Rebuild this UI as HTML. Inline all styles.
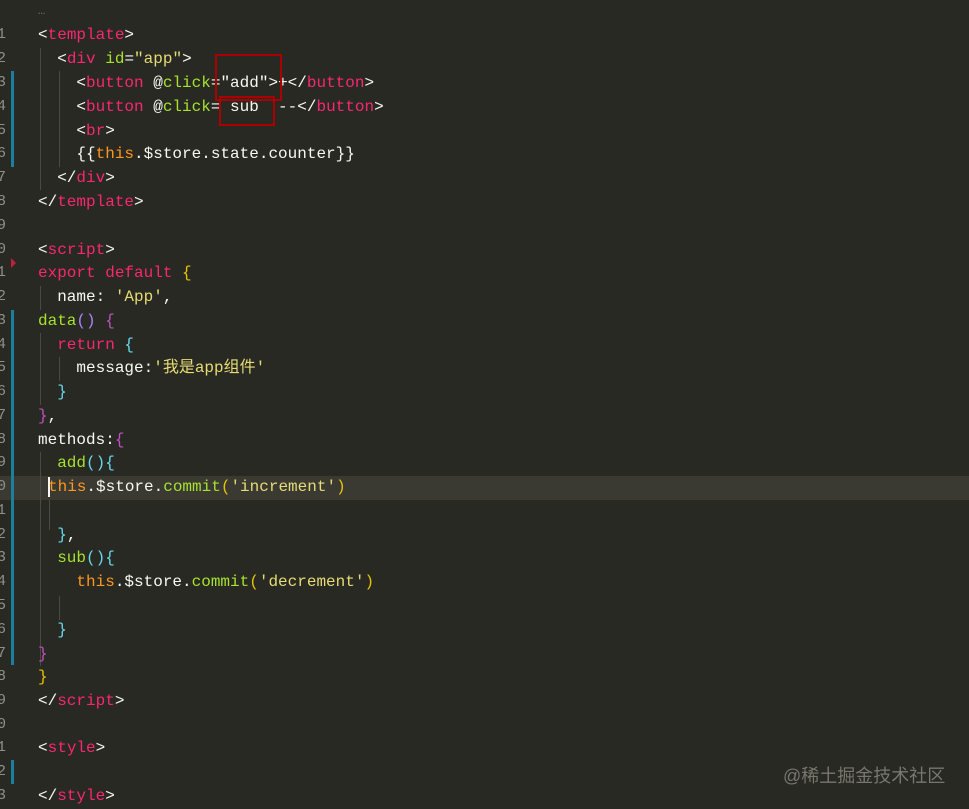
<!DOCTYPE html>
<html><head><meta charset="utf-8"><style>
body{margin:0;width:969px;height:809px;background:#282923;overflow:hidden;position:relative;font-family:"Liberation Mono","Noto Sans CJK SC",monospace;font-size:16px;color:#f8f8f2}
.l{position:absolute;left:38px;height:24px;line-height:24px;white-space:pre}
.n{position:absolute;left:-6px;width:12px;text-align:right;color:#8f908a;height:24px;line-height:24px;font-size:15px}
.t{color:#f92672}.a{color:#a6e22e}.s{color:#e6db74}.o{color:#fd971f}.b{color:#66d9ef}.p{color:#ae81ff}.y{color:#e6c400}.m{color:#c050c0}
.bar{position:absolute;left:11px;width:3px;background:#1b7fa0}
.g{position:absolute;width:1px;background:#4a4a44}
.box{position:absolute;border:2px solid #a00;}
</style></head><body>
<div style="position:absolute;left:0;top:476px;width:969px;height:24px;background:#3a3a33"></div>
<div class="bar" style="top:71px;height:96px"></div>
<div class="bar" style="top:310px;height:355px"></div>
<div class="bar" style="top:760px;height:24px"></div>
<div class="g" style="left:40px;top:48px;height:142px"></div>
<div class="g" style="left:59px;top:71px;height:96px"></div>
<div class="g" style="left:40px;top:286px;height:24px"></div>
<div class="g" style="left:40px;top:333px;height:72px"></div>
<div class="g" style="left:59px;top:357px;height:24px"></div>
<div class="g" style="left:40px;top:452px;height:214px"></div>
<div class="g" style="left:59px;top:596px;height:24px"></div>
<div class="g" style="left:49px;top:500px;height:30px"></div>
<div class="l" style="top:-1px;color:#75715e;font-size:12px">…</div>
<div class="l" style="top:23px">&lt;<span class="t">template</span>&gt;</div>
<div class="l" style="top:47px">  &lt;<span class="t">div</span> <span class="a">id</span>=<span class="s">"app"</span>&gt;</div>
<div class="l" style="top:71px">    &lt;<span class="t">button</span> @<span class="a">click</span>=<span>"add"</span>&gt;+&lt;/<span class="t">button</span>&gt;</div>
<div class="l" style="top:95px">    &lt;<span class="t">button</span> @<span class="a">click</span>= sub  --&lt;/<span class="t">button</span>&gt;</div>
<div class="l" style="top:119px">    &lt;<span class="t">br</span>&gt;</div>
<div class="l" style="top:142px">    {{<span class="o">this</span>.$store.state.counter}}</div>
<div class="l" style="top:166px">  &lt;/<span class="t">div</span>&gt;</div>
<div class="l" style="top:190px">&lt;/<span class="t">template</span>&gt;</div>
<div class="l" style="top:238px">&lt;<span class="t">script</span>&gt;</div>
<div class="l" style="top:261px"><span class="t">export default</span> <span class="y">{</span></div>
<div class="l" style="top:285px">  name: <span class="s">'App'</span>,</div>
<div class="l" style="top:309px"><span class="a">data</span><span class="p">()</span> <span class="m">{</span></div>
<div class="l" style="top:333px">  <span class="t">return</span> <span class="b">{</span></div>
<div class="l" style="top:356px">    message:<span class="s">'我是app组件'</span></div>
<div class="l" style="top:380px">  <span class="b">}</span></div>
<div class="l" style="top:404px"><span class="m">}</span>,</div>
<div class="l" style="top:428px">methods:<span class="m">{</span></div>
<div class="l" style="top:451px">  <span class="a">add</span><span class="b">(){</span></div>
<div class="l" style="top:475px;left:48px"><span class="o">this</span>.$store.<span class="a">commit</span><span class="y">(</span><span class="s">'increment'</span><span class="y">)</span></div>
<div class="l" style="top:523px">  <span class="b">}</span>,</div>
<div class="l" style="top:546px">  <span class="a">sub</span><span class="b">(){</span></div>
<div class="l" style="top:570px">    <span class="o">this</span>.$store.<span class="a">commit</span><span class="y">(</span><span class="s">'decrement'</span><span class="y">)</span></div>
<div class="l" style="top:618px">  <span class="b">}</span></div>
<div class="l" style="top:642px"><span class="m">}</span></div>
<div class="l" style="top:665px"><span class="y">}</span></div>
<div class="l" style="top:689px">&lt;/<span class="t">script</span>&gt;</div>
<div class="l" style="top:736px">&lt;<span class="t">style</span>&gt;</div>
<div class="l" style="top:784px">&lt;/<span class="t">style</span>&gt;</div>
<div style="position:absolute;left:48px;top:477px;width:2px;height:20px;background:#f8f8f0"></div>
<div class="n" style="top:23px">1</div><div class="n" style="top:47px">2</div><div class="n" style="top:71px">3</div><div class="n" style="top:95px">4</div><div class="n" style="top:119px">5</div><div class="n" style="top:142px">6</div><div class="n" style="top:166px">7</div><div class="n" style="top:190px">8</div><div class="n" style="top:214px">9</div><div class="n" style="top:238px">0</div><div class="n" style="top:261px">1</div><div class="n" style="top:285px">2</div><div class="n" style="top:309px">3</div><div class="n" style="top:333px">4</div><div class="n" style="top:356px">5</div><div class="n" style="top:380px">6</div><div class="n" style="top:404px">7</div><div class="n" style="top:428px">8</div><div class="n" style="top:451px">9</div><div class="n" style="top:475px">0</div><div class="n" style="top:499px">1</div><div class="n" style="top:523px">2</div><div class="n" style="top:546px">3</div><div class="n" style="top:570px">4</div><div class="n" style="top:594px">5</div><div class="n" style="top:618px">6</div><div class="n" style="top:642px">7</div><div class="n" style="top:665px">8</div><div class="n" style="top:689px">9</div><div class="n" style="top:713px">0</div><div class="n" style="top:736px">1</div><div class="n" style="top:760px">2</div><div class="n" style="top:784px">3</div>
<div style="position:absolute;left:11px;top:258px;width:0;height:0;border-top:5px solid transparent;border-bottom:5px solid transparent;border-left:5px solid #c0203a"></div>
<div class="box" style="left:215px;top:54px;width:63px;height:43px"></div>
<div class="box" style="left:219px;top:96px;width:52px;height:26px"></div>
<div style="position:absolute;left:783px;top:762px;font-family:'Liberation Sans','Noto Sans CJK SC',sans-serif;font-size:18px;color:#77776f">@稀土掘金技术社区</div>
</body></html>
